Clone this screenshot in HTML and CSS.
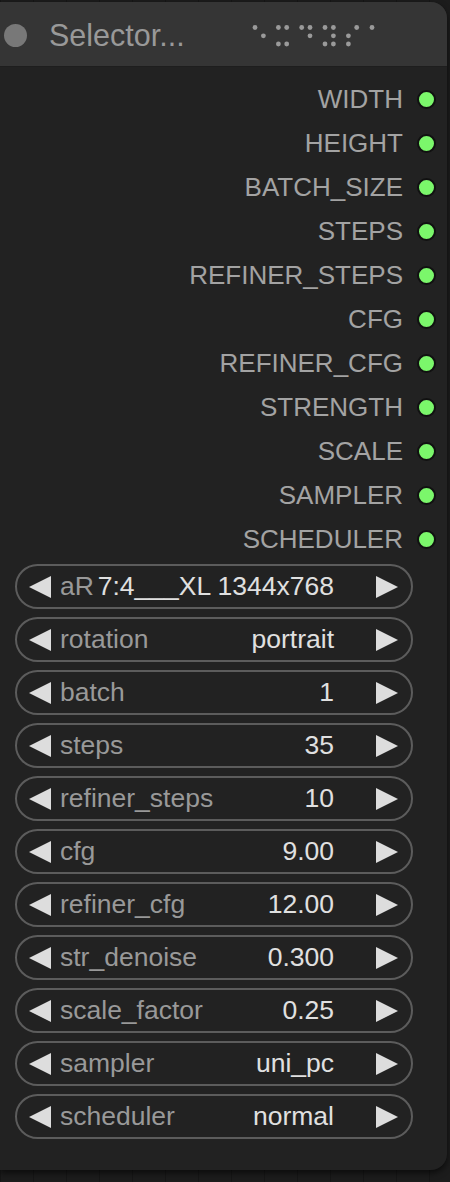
FILE: index.html
```html
<!DOCTYPE html>
<html>
<head>
    <title>Selector node</title>
    <link rel="stylesheet" href="styles.css">
</head>
<body>
    <div class="node">
        <div class="node-title">
            <span class="title-dot"></span>
            <span class="title-text">Selector...</span>
            <svg class="title-badge" width="130" height="24" viewBox="0 0 130 24">
                <g fill="#9a9a9a">
                    <circle cx="3" cy="3.5" r="2.4"/>
                    <circle cx="11.4" cy="11.8" r="2.4"/>
                    <circle cx="26.4" cy="3.5" r="2.4"/>
                    <circle cx="34.7" cy="3.5" r="2.4"/>
                    <circle cx="26.4" cy="20" r="2.4"/>
                    <circle cx="34.7" cy="20" r="2.4"/>
                    <circle cx="49.7" cy="3.5" r="2.4"/>
                    <circle cx="58" cy="3.5" r="2.4"/>
                    <circle cx="58" cy="11.8" r="2.4"/>
                    <circle cx="73" cy="3.5" r="2.4"/>
                    <circle cx="81.4" cy="3.5" r="2.4"/>
                    <circle cx="81.4" cy="11.8" r="2.4"/>
                    <circle cx="73" cy="20" r="2.4"/>
                    <circle cx="81.4" cy="20" r="2.4"/>
                    <circle cx="104.7" cy="3.5" r="2.4"/>
                    <circle cx="96.4" cy="11.8" r="2.4"/>
                    <circle cx="96.4" cy="20" r="2.4"/>
                    <circle cx="120" cy="3.5" r="2.4"/>
                </g>
            </svg>
        </div>

        <div class="outputs">
            <div class="output">WIDTH <span class="slot"></span></div>
            <div class="output">HEIGHT <span class="slot"></span></div>
            <div class="output">BATCH_SIZE <span class="slot"></span></div>
            <div class="output">STEPS <span class="slot"></span></div>
            <div class="output">REFINER_STEPS <span class="slot"></span></div>
            <div class="output">CFG <span class="slot"></span></div>
            <div class="output">REFINER_CFG <span class="slot"></span></div>
            <div class="output">STRENGTH <span class="slot"></span></div>
            <div class="output">SCALE <span class="slot"></span></div>
            <div class="output">SAMPLER <span class="slot"></span></div>
            <div class="output">SCHEDULER <span class="slot"></span></div>
        </div>

        <div class="widgets" id="widgets"></div>
    </div>

    <script>
        const widgets = [
            ['aR', '7:4___XL 1344x768'],
            ['rotation', 'portrait'],
            ['batch', '1'],
            ['steps', '35'],
            ['refiner_steps', '10'],
            ['cfg', '9.00'],
            ['refiner_cfg', '12.00'],
            ['str_denoise', '0.300'],
            ['scale_factor', '0.25'],
            ['sampler', 'uni_pc'],
            ['scheduler', 'normal']
        ];

        const list = document.getElementById('widgets');
        const left = '<svg class="arrow" width="22" height="22" viewBox="0 0 22 22"><polygon points="22,0 22,22 0,11"/></svg>';
        const right = '<svg class="arrow arrow-right" width="22" height="22" viewBox="0 0 22 22"><polygon points="0,0 0,22 22,11"/></svg>';

        widgets.forEach(w => {
            const row = document.createElement('div');
            row.className = 'widget';
            row.innerHTML = left +
                '<span class="widget-label">' + w[0] + '</span>' +
                '<span class="widget-value">' + w[1] + '</span>' +
                right;
            list.appendChild(row);
        });
    </script>
</body>
</html>
```

FILE: styles.css
```css
* {
    margin: 0;
    padding: 0;
    box-sizing: border-box;
}

body {
    background-color: #1c1c1c;
    background-image: linear-gradient(90deg, #161616 1px, transparent 1px);
    background-size: 33px 100%;
    font-family: 'Liberation Sans', Arial, sans-serif;
    width: 450px;
    height: 1182px;
    overflow: hidden;
    padding-top: 2px;
}

.node {
    width: 447px;
    height: 1168px;
    background: #222222;
    border-radius: 0 16px 16px 0;
    box-shadow: 0 3px 6px rgba(0, 0, 0, 0.6);
    overflow: hidden;
}

.node-title {
    height: 65px;
    background: #353535;
    display: flex;
    align-items: center;
    border-bottom: 1px solid #1e1e1e;
}

.title-dot {
    width: 23px;
    height: 23px;
    border-radius: 50%;
    background: #787878;
    margin-left: 4px;
    margin-top: 2px;
}

.title-text {
    font-size: 30.5px;
    color: #999;
    margin-left: 22px;
    margin-top: 2px;
}

.title-badge {
    margin-left: 67px;
    margin-top: 3px;
}

.outputs {
    padding-top: 10px;
    padding-right: 11px;
}

.output {
    height: 44px;
    display: flex;
    align-items: center;
    justify-content: flex-end;
    font-size: 26px;
    color: #a3a3a3;
}

.slot {
    width: 19px;
    height: 19px;
    border-radius: 50%;
    background: #7bf76b;
    border: 2px solid #111;
    margin-left: 14px;
}

.widgets {
    padding-top: 3px;
    padding-left: 15px;
    display: flex;
    flex-direction: column;
    gap: 8px;
}

.widget {
    width: 398px;
    height: 45px;
    border: 2px solid #5c5c5c;
    border-radius: 23px;
    display: flex;
    align-items: center;
    padding: 0 13px 0 12px;
    font-size: 26.5px;
}

.arrow {
    fill: #dddddd;
    flex-shrink: 0;
}

.widget-label {
    flex: 1;
    color: #999;
    margin-left: 9px;
    white-space: nowrap;
}

.widget-value {
    color: #e0e0e0;
    white-space: nowrap;
}

.arrow-right {
    margin-left: 42px;
}
```
